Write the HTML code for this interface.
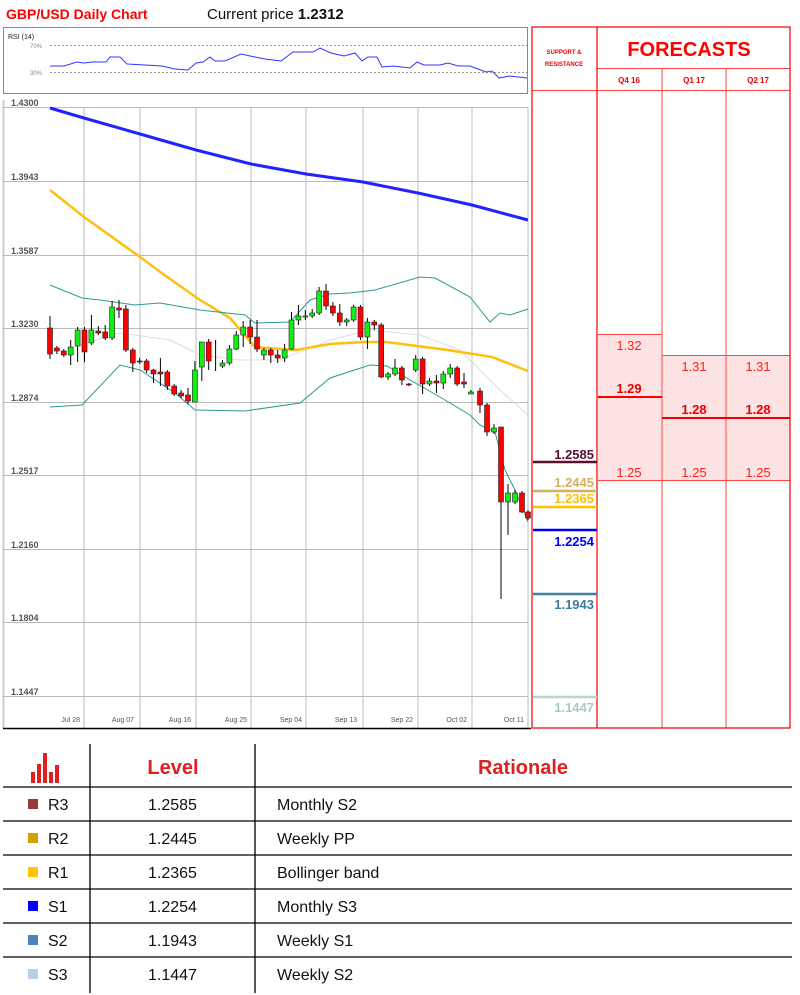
<!DOCTYPE html>
<html><head><meta charset="utf-8"><style>
body{margin:0;width:800px;height:995px;background:#fff;font-family:"Liberation Sans",sans-serif;position:relative;overflow:hidden}
</style></head><body>
<svg width="800" height="995" style="position:absolute;left:0;top:0" font-family="Liberation Sans, sans-serif">
<text x="6" y="19" font-size="14" font-weight="bold" fill="#f00">GBP/USD Daily Chart</text>
<text x="207" y="19" font-size="15" fill="#111">Current price <tspan font-weight="bold">1.2312</tspan></text>
<!-- RSI panel -->
<rect x="3.5" y="27.5" width="524" height="66" fill="#fff" stroke="#888"/>
<text x="8" y="39" font-size="7" fill="#222">RSI (14)</text>
<text x="30" y="48" font-size="6" fill="#888">70%</text>
<text x="30" y="75" font-size="6" fill="#888">30%</text>
<line x1="50" y1="45.5" x2="528" y2="45.5" stroke="#777" stroke-dasharray="2,2" stroke-width="0.7"/>
<line x1="50" y1="72.5" x2="528" y2="72.5" stroke="#777" stroke-dasharray="2,2" stroke-width="0.7"/>
<polyline fill="none" stroke="#33f" stroke-width="1" points="50,66 64,66 77,62 84,63 92,62 106,62 110,57 120,57 127,64 145,65 162,66 175,69 188,70 196,63 203,62 210,57 215,61 225,61 241,54 255,57 265,59 281,61 293,52 313,52 320,48 331,53 344,56 355,53 362,61 368,57 377,57 382,67 393,66 410,68 417,62 424,65 440,65 448,63 458,66 470,66 486,72 492,71 499,78 510,76 527,78"/>
<!-- main chart -->
<rect x="3.5" y="100" width="525" height="628" fill="#fff"/>
<line x1="3.5" y1="100" x2="3.5" y2="728" stroke="#ccc" stroke-width="2"/>
<g stroke="#bbb" stroke-width="1">
<line x1="84" y1="107" x2="84" y2="728"/><line x1="140" y1="107" x2="140" y2="728"/><line x1="196" y1="107" x2="196" y2="728"/><line x1="251" y1="107" x2="251" y2="728"/><line x1="306" y1="107" x2="306" y2="728"/><line x1="363" y1="107" x2="363" y2="728"/><line x1="418" y1="107" x2="418" y2="728"/><line x1="472" y1="107" x2="472" y2="728"/><line x1="528" y1="107" x2="528" y2="728"/>
<line x1="3" y1="107.5" x2="528" y2="107.5"/><line x1="3" y1="181.5" x2="528" y2="181.5"/><line x1="3" y1="255.5" x2="528" y2="255.5"/><line x1="3" y1="328.5" x2="528" y2="328.5"/><line x1="3" y1="402.5" x2="528" y2="402.5"/><line x1="3" y1="475.5" x2="528" y2="475.5"/><line x1="3" y1="549.5" x2="528" y2="549.5"/><line x1="3" y1="622.5" x2="528" y2="622.5"/><line x1="3" y1="696.5" x2="528" y2="696.5"/>
</g>
<g font-size="9" fill="#555" font-weight="bold">
<text x="11" y="106">1.4300</text><text x="11" y="180">1.3943</text><text x="11" y="254">1.3587</text><text x="11" y="327">1.3230</text><text x="11" y="401">1.2874</text><text x="11" y="474">1.2517</text><text x="11" y="548">1.2160</text><text x="11" y="621">1.1804</text><text x="11" y="695">1.1447</text>
</g>
<g font-size="7" fill="#555" text-anchor="end">
<text x="80" y="722">Jul 28</text><text x="134" y="722">Aug 07</text><text x="191" y="722">Aug 16</text><text x="247" y="722">Aug 25</text><text x="302" y="722">Sep 04</text><text x="357" y="722">Sep 13</text><text x="413" y="722">Sep 22</text><text x="467" y="722">Oct 02</text><text x="524" y="722">Oct 11</text>
</g>
<line x1="3" y1="728.5" x2="531" y2="728.5" stroke="#000" stroke-width="1.5"/>
<!-- MAs -->
<polyline fill="none" stroke="#22f" stroke-width="3" points="50,108 84,118 140,134 196,150 251,164 306,174 363,182 418,193 472,205 528,220"/>
<polyline fill="none" stroke="#ddd" stroke-width="1" points="80,345 120,333 170,340 200,355 240,360 280,360 330,340 370,330 420,335 460,350 500,390 528,415"/>
<polyline fill="none" stroke="#ffbf10" stroke-width="2.5" points="50,190 84,217 140,257 163,274 200,300 230,318 255,347 296,350 330,344 362,342 386,342 448,350 492,357 528,371"/>
<polyline fill="none" stroke="#2a9a94" stroke-width="1" points="50,285 82,298 100,300 135,305 160,303 200,310 245,315 255,323 290,322 310,300 330,294 350,293 375,290 420,277 435,278 470,297 490,322 500,313 510,315 528,309"/>
<polyline fill="none" stroke="#2a9a94" stroke-width="1" points="50,407 82,405 120,365 140,370 175,393 195,410 245,411 300,403 330,378 370,365 387,366 410,380 440,397 470,415 480,425 495,432 505,470 515,490 528,522"/>
<!-- candles -->
<g stroke="#000" stroke-width="1">
<line x1="50" y1="316" x2="50" y2="359"/><line x1="56.9" y1="346" x2="56.9" y2="354"/><line x1="63.8" y1="349" x2="63.8" y2="357"/><line x1="70.7" y1="340" x2="70.7" y2="365"/><line x1="77.6" y1="327" x2="77.6" y2="362"/><line x1="84.5" y1="327" x2="84.5" y2="362"/><line x1="91.4" y1="315" x2="91.4" y2="345"/><line x1="98.3" y1="326" x2="98.3" y2="335"/><line x1="105.2" y1="325" x2="105.2" y2="340"/><line x1="112.1" y1="301" x2="112.1" y2="340"/><line x1="119" y1="300" x2="119" y2="318"/><line x1="125.9" y1="305" x2="125.9" y2="352"/><line x1="132.8" y1="348" x2="132.8" y2="372"/><line x1="139.7" y1="358" x2="139.7" y2="364"/><line x1="146.6" y1="359" x2="146.6" y2="373"/><line x1="153.5" y1="369" x2="153.5" y2="383"/><line x1="160.4" y1="358" x2="160.4" y2="386"/><line x1="167.3" y1="370" x2="167.3" y2="390"/><line x1="174.2" y1="384" x2="174.2" y2="396"/><line x1="181.1" y1="390" x2="181.1" y2="398"/><line x1="188" y1="388" x2="188" y2="404"/><line x1="194.9" y1="361" x2="194.9" y2="402"/><line x1="201.8" y1="362" x2="201.8" y2="381"/><line x1="208.7" y1="339" x2="208.7" y2="370"/><line x1="215.6" y1="340" x2="215.6" y2="371"/><line x1="222.5" y1="360" x2="222.5" y2="368"/><line x1="229.4" y1="345" x2="229.4" y2="365"/><line x1="236.3" y1="331" x2="236.3" y2="350"/><line x1="243.2" y1="321" x2="243.2" y2="347"/><line x1="250.1" y1="320" x2="250.1" y2="344"/><line x1="257" y1="320" x2="257" y2="352"/><line x1="263.9" y1="348" x2="263.9" y2="360"/><line x1="270.8" y1="348" x2="270.8" y2="363"/><line x1="277.7" y1="350" x2="277.7" y2="363"/><line x1="284.6" y1="344" x2="284.6" y2="362"/><line x1="291.5" y1="312" x2="291.5" y2="350"/><line x1="298.4" y1="305" x2="298.4" y2="325"/><line x1="305.3" y1="310" x2="305.3" y2="320"/><line x1="312.2" y1="309" x2="312.2" y2="318"/><line x1="319.1" y1="287" x2="319.1" y2="315"/><line x1="326" y1="284" x2="326" y2="310"/><line x1="332.9" y1="302" x2="332.9" y2="316"/><line x1="339.8" y1="304" x2="339.8" y2="326"/><line x1="346.7" y1="318" x2="346.7" y2="326"/><line x1="353.6" y1="305" x2="353.6" y2="322"/><line x1="360.5" y1="305" x2="360.5" y2="340"/><line x1="367.4" y1="318" x2="367.4" y2="349"/><line x1="374.3" y1="320" x2="374.3" y2="330"/><line x1="381.2" y1="323" x2="381.2" y2="378"/><line x1="388.1" y1="372" x2="388.1" y2="380"/><line x1="395" y1="359" x2="395" y2="376"/><line x1="401.9" y1="366" x2="401.9" y2="385"/><line x1="408.8" y1="383" x2="408.8" y2="386"/><line x1="415.7" y1="355" x2="415.7" y2="372"/><line x1="422.6" y1="357" x2="422.6" y2="394"/><line x1="429.5" y1="378" x2="429.5" y2="386"/><line x1="436.4" y1="375" x2="436.4" y2="393"/><line x1="443.3" y1="371" x2="443.3" y2="389"/><line x1="450.2" y1="364" x2="450.2" y2="378"/><line x1="457.1" y1="366" x2="457.1" y2="386"/><line x1="464" y1="373" x2="464" y2="388"/><line x1="470.9" y1="390" x2="470.9" y2="394"/>
<line x1="480" y1="388" x2="480" y2="413"/><line x1="487" y1="403" x2="487" y2="436"/><line x1="494" y1="424" x2="494" y2="434"/><line x1="501" y1="427" x2="501" y2="599"/><line x1="508" y1="484" x2="508" y2="535"/><line x1="515" y1="490" x2="515" y2="504"/><line x1="522" y1="491" x2="522" y2="513"/><line x1="528" y1="510" x2="528" y2="520"/>
</g>
<g stroke="#222" stroke-width="0.6">
<g fill="#f00">
<rect x="47.5" y="328" width="5" height="26"/><rect x="54.4" y="348" width="5" height="3"/><rect x="61.3" y="351" width="5" height="4"/><rect x="82" y="330" width="5" height="22"/><rect x="95.8" y="331" width="5" height="2"/><rect x="102.7" y="332" width="5" height="6"/><rect x="116.5" y="308" width="5" height="2"/><rect x="123.4" y="309" width="5" height="41"/><rect x="130.3" y="350" width="5" height="13"/><rect x="137.2" y="361" width="5" height="1"/><rect x="144.1" y="361" width="5" height="9"/><rect x="151" y="370" width="5" height="4"/><rect x="157.9" y="372" width="5" height="2"/><rect x="164.8" y="372" width="5" height="14"/><rect x="171.7" y="386" width="5" height="8"/><rect x="178.6" y="393" width="5" height="3"/><rect x="185.5" y="395" width="5" height="6"/><rect x="206.2" y="342" width="5" height="19"/><rect x="247.6" y="327" width="5" height="10"/><rect x="254.5" y="337" width="5" height="12"/><rect x="268.3" y="350" width="5" height="5"/><rect x="275.2" y="355" width="5" height="3"/><rect x="323.5" y="291" width="5" height="15"/><rect x="330.4" y="306" width="5" height="7"/><rect x="337.3" y="313" width="5" height="9"/><rect x="358" y="307" width="5" height="30"/><rect x="371.8" y="322" width="5" height="3"/><rect x="378.7" y="325" width="5" height="52"/><rect x="399.4" y="368" width="5" height="12"/><rect x="406.3" y="384" width="5" height="1"/><rect x="420.1" y="359" width="5" height="25"/><rect x="434" y="381" width="5" height="2"/><rect x="454.6" y="368" width="5" height="16"/><rect x="461.5" y="382" width="5" height="2"/>
<rect x="477.5" y="391" width="5" height="14"/><rect x="484.5" y="405" width="5" height="27"/><rect x="498.5" y="427" width="5" height="75"/><rect x="519.5" y="493" width="5" height="19"/><rect x="525.5" y="512" width="5" height="6"/>
</g>
<g fill="#1e1">
<rect x="68.2" y="347" width="5" height="8"/><rect x="75.1" y="330" width="5" height="16"/><rect x="88.9" y="330" width="5" height="13"/><rect x="109.6" y="307" width="5" height="31"/><rect x="192.4" y="370" width="5" height="32"/><rect x="199.3" y="342" width="5" height="25"/><rect x="220" y="363" width="5" height="3"/><rect x="226.9" y="349" width="5" height="14"/><rect x="233.8" y="335" width="5" height="14"/><rect x="240.7" y="327" width="5" height="8"/><rect x="261.4" y="350" width="5" height="5"/><rect x="282.1" y="350" width="5" height="8"/><rect x="289" y="320" width="5" height="29"/><rect x="295.9" y="316" width="5" height="4"/><rect x="302.8" y="316" width="5" height="1"/><rect x="309.7" y="313" width="5" height="3"/><rect x="316.6" y="291" width="5" height="22"/><rect x="344.2" y="320" width="5" height="2"/><rect x="351.1" y="307" width="5" height="13"/><rect x="364.9" y="322" width="5" height="15"/><rect x="385.6" y="374" width="5" height="3"/><rect x="392.5" y="368" width="5" height="6"/><rect x="413.2" y="359" width="5" height="11"/><rect x="427" y="381" width="5" height="3"/><rect x="440.8" y="374" width="5" height="9"/><rect x="447.7" y="368" width="5" height="6"/><rect x="468.4" y="392" width="5" height="2"/>
<rect x="491.5" y="428" width="5" height="4"/><rect x="505.5" y="493" width="5" height="9"/><rect x="512.5" y="493" width="5" height="9"/>
</g>
</g>
<!-- right panel -->
<rect x="598" y="334" width="64" height="146" fill="#fde3e3"/>
<rect x="662" y="355" width="128" height="125" fill="#fde3e3"/>
<g stroke="#f44" stroke-width="1">
<line x1="598" y1="334.5" x2="662" y2="334.5"/><line x1="662" y1="355.5" x2="790" y2="355.5"/><line x1="598" y1="480.5" x2="790" y2="480.5"/>
<line x1="532" y1="90.5" x2="790" y2="90.5"/><line x1="597" y1="68.5" x2="790" y2="68.5"/>
<line x1="662" y1="68" x2="662" y2="728"/><line x1="726" y1="68" x2="726" y2="728"/>
</g>
<g stroke="#e00" stroke-width="1.2" fill="none">
<rect x="532" y="27" width="258" height="701"/><line x1="597" y1="27" x2="597" y2="728"/>
</g>
<line x1="598" y1="397" x2="662" y2="397" stroke="#f00" stroke-width="2"/>
<line x1="662" y1="418" x2="790" y2="418" stroke="#e00" stroke-width="2"/>
<g font-size="6" fill="#e00" font-weight="bold" text-anchor="middle"><text x="564" y="54">SUPPORT &amp;</text><text x="564" y="66">RESISTANCE</text>
<text x="629" y="83" font-size="8">Q4 16</text><text x="694" y="83" font-size="8">Q1 17</text><text x="758" y="83" font-size="8">Q2 17</text></g>
<text x="689" y="56" font-size="20" fill="#f00" font-weight="bold" text-anchor="middle">FORECASTS</text>
<g font-size="13" fill="#f22" text-anchor="middle">
<text x="629" y="350">1.32</text><text x="694" y="371">1.31</text><text x="758" y="371">1.31</text>
<text x="629" y="477">1.25</text><text x="694" y="477">1.25</text><text x="758" y="477">1.25</text>
<text x="629" y="393" font-weight="bold" fill="#e00">1.29</text><text x="694" y="414" font-weight="bold" fill="#e00">1.28</text><text x="758" y="414" font-weight="bold" fill="#e00">1.28</text>
</g>
<g stroke-width="2.5">
<line x1="533" y1="462" x2="597" y2="462" stroke="#5a1030"/><line x1="533" y1="491" x2="597" y2="491" stroke="#d4b060"/><line x1="533" y1="507" x2="597" y2="507" stroke="#ffc000"/><line x1="533" y1="530" x2="597" y2="530" stroke="#00f"/><line x1="533" y1="594" x2="597" y2="594" stroke="#4080a0"/><line x1="533" y1="697" x2="597" y2="697" stroke="#b8d4d4"/>
</g>
<g font-size="13" font-weight="bold" text-anchor="end">
<text x="594" y="459" fill="#5a1030">1.2585</text><text x="594" y="487" fill="#d4b060">1.2445</text><text x="594" y="503" fill="#ffc000">1.2365</text><text x="594" y="546" fill="#00f">1.2254</text><text x="594" y="609" fill="#3a7ca0">1.1943</text><text x="594" y="712" fill="#a8c8c8">1.1447</text>
</g>
<!-- table -->
<g stroke="#000" stroke-width="1.3">
<line x1="90" y1="744" x2="90" y2="993"/><line x1="255" y1="744" x2="255" y2="993"/>
<line x1="3" y1="787" x2="792" y2="787"/><line x1="3" y1="821" x2="792" y2="821"/><line x1="3" y1="855" x2="792" y2="855"/><line x1="3" y1="889" x2="792" y2="889"/><line x1="3" y1="923" x2="792" y2="923"/><line x1="3" y1="957" x2="792" y2="957"/>
</g>
<g fill="#e02020"><rect x="31" y="772" width="4" height="11"/><rect x="37" y="764" width="4" height="19"/><rect x="43" y="753" width="4" height="30"/><rect x="49" y="772" width="4" height="11"/><rect x="55" y="765" width="4" height="18"/></g>
<text x="173" y="774" font-size="20" fill="#e02020" font-weight="bold" text-anchor="middle">Level</text>
<text x="523" y="774" font-size="20" fill="#e02020" font-weight="bold" text-anchor="middle">Rationale</text>
<rect x="28" y="799" width="10" height="10" fill="#943c3c"/><rect x="28" y="833" width="10" height="10" fill="#d4a000"/><rect x="28" y="867" width="10" height="10" fill="#ffc800"/><rect x="28" y="901" width="10" height="10" fill="#0000ff"/><rect x="28" y="935" width="10" height="10" fill="#4f81bd"/><rect x="28" y="969" width="10" height="10" fill="#b8cfe6"/>
<g font-size="16" fill="#111">
<text x="48" y="810">R3</text><text x="148" y="810">1.2585</text><text x="277" y="810">Monthly S2</text>
<text x="48" y="844">R2</text><text x="148" y="844">1.2445</text><text x="277" y="844">Weekly PP</text>
<text x="48" y="878">R1</text><text x="148" y="878">1.2365</text><text x="277" y="878">Bollinger band</text>
<text x="48" y="912">S1</text><text x="148" y="912">1.2254</text><text x="277" y="912">Monthly S3</text>
<text x="48" y="946">S2</text><text x="148" y="946">1.1943</text><text x="277" y="946">Weekly S1</text>
<text x="48" y="980">S3</text><text x="148" y="980">1.1447</text><text x="277" y="980">Weekly S2</text>
</g>
</svg>
</body></html>
